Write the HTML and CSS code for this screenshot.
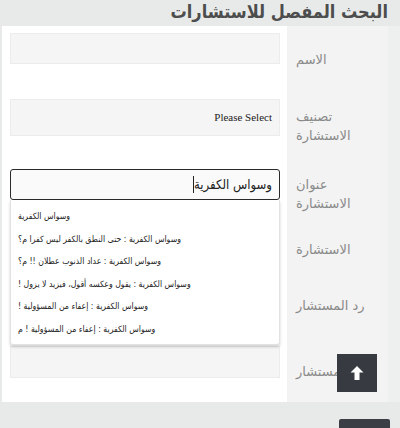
FILE: index.html
```html
<!DOCTYPE html>
<html lang="ar" dir="rtl">
<head>
<meta charset="utf-8">
<link rel="stylesheet" href="styles.css">
</head>
<body>
<h1 class="title">البحث المفصل للاستشارات</h1>
<div class="panel">
  <div class="form">
    <div class="row r1">
      <div class="label">الاسم</div>
      <div class="field"><div class="inp"></div></div>
    </div>
    <div class="row r2">
      <div class="label">تصنيف<br>الاستشارة</div>
      <div class="field"><div class="inp sel" dir="ltr">Please Select</div></div>
    </div>
    <div class="row r3">
      <div class="label">عنوان<br>الاستشارة</div>
      <div class="field">
        <div class="inp focus"><span class="typed">وسواس الكفرية</span><span class="caret"></span></div>
        <ul class="ac">
          <li>وسواس الكفرية</li>
          <li>وسواس الكفرية : حتى النطق بالكفر ليس كفرا م؟</li>
          <li>وسواس الكفرية : عداد الذنوب عطلان !! م؟</li>
          <li>وسواس الكفرية : يقول وعكسه أقول، فيزيد لا يزول !</li>
          <li>وسواس الكفرية : إعفاء من المسؤولية !</li>
          <li>وسواس الكفرية : إعفاء من المسؤولية ! م</li>
        </ul>
      </div>
    </div>
    <div class="row r4">
      <div class="label">الاستشارة</div>
      <div class="field"><div class="inp tall"></div></div>
    </div>
    <div class="row r5">
      <div class="label">رد المستشار</div>
      <div class="field"><div class="inp tall"></div></div>
    </div>
    <div class="row r6">
      <div class="label">المستشار</div>
      <div class="field"><div class="inp last"></div></div>
    </div>
  </div>
</div>
<div class="actions"><button class="submit" type="button"></button></div>
<button class="totop" type="button" aria-label="top">
  <svg width="14" height="16" viewBox="0 0 14 16"><path d="M7 1 L13.5 7.5 L9.5 7.5 L9.5 15 L4.5 15 L4.5 7.5 L0.5 7.5 Z" fill="#fff"/></svg>
</button>
</body>
</html>
```

FILE: styles.css
```css
html, body {
  margin: 0;
  padding: 0;
}
body {
  background: #e8eaea;
  font-family: "DejaVu Sans", sans-serif;
  width: 400px;
  height: 428px;
  overflow: hidden;
}
.title {
  margin: 0;
  padding: 0 12px 0 0;
  height: 26px;
  line-height: 24px;
  font-family: "DejaVu Sans Condensed", "DejaVu Sans", sans-serif;
  font-size: 18px;
  font-weight: bold;
  color: #4d4d4d;
  text-align: right;
}
.panel {
  margin-left: 2px;
  padding-right: 12px;
  background: #eef0f0;
}
.form {
  display: flex;
  flex-direction: column;
}
.row {
  display: flex;
}
.label {
  width: 101px;
  box-sizing: border-box;
  background: #f3f3f3;
  padding-left: 9px;
  text-align: left;
  font-size: 13px;
  line-height: 19px;
  color: #8a8a8a;
}
.field {
  flex: 1;
  background: #fff;
  padding: 7px 7px 0 8px;
  position: relative;
}
.inp {
  height: 31px;
  box-sizing: border-box;
  background: #f5f5f5;
  border: 1px solid #ececec;
}
.sel {
  height: 37px;
  text-align: right;
  padding-right: 7px;
  font-family: "Liberation Serif", serif;
  font-size: 11px;
  line-height: 34px;
  color: #222;
}
.focus {
  background: #fafafa;
  border: 1px solid #2a2a2a;
  border-radius: 3px;
  display: flex;
  align-items: center;
  padding-right: 7px;
  font-family: "DejaVu Sans Condensed", "DejaVu Sans", sans-serif;
  font-size: 13px;
  color: #222;
}
.caret {
  width: 1px;
  height: 17px;
  background: #222;
}
.tall {
  height: 44px;
}
.last {
  height: 32px;
}
.r1 { height: 66px; }
.r1 .label { padding-top: 24px; }
.r2 { height: 70px; }
.r2 .label { padding-top: 15px; }
.r3 { height: 60px; }
.r3 .label { padding-top: 13px; }
.r4 { height: 56px; }
.r4 .label { padding-top: 18px; }
.r5 { height: 61px; }
.r5 .label { padding-top: 18px; }
.r6 { height: 63px; }
.r6 .label { padding-top: 23px; }
.ac {
  position: absolute;
  top: 38px;
  left: 8px;
  right: 7px;
  height: 145px;
  box-sizing: border-box;
  margin: 0;
  padding: 5px 0 0 0;
  list-style: none;
  background: #fff;
  border: 1px solid #e2e2e2;
  border-top: none;
  border-radius: 0 0 3px 3px;
  box-shadow: 0 2px 3px rgba(0, 0, 0, 0.18);
  z-index: 2;
}
.ac li {
  height: 22.6px;
  line-height: 22.6px;
  padding-left: 7px;
  text-align: left;
  font-family: "DejaVu Sans Condensed", "DejaVu Sans", sans-serif;
  font-size: 8.7px;
  color: #222;
  white-space: nowrap;
}
.actions {
  display: flex;
  padding: 17px 10px 0 0;
}
.submit {
  width: 51px;
  height: 30px;
  border: none;
  background: #3b3e45;
  border-radius: 2px;
}
.totop {
  position: fixed;
  left: 337px;
  top: 354px;
  width: 40px;
  height: 38px;
  border: none;
  padding: 0;
  background: #383a41;
  display: flex;
  align-items: center;
  justify-content: center;
  z-index: 5;
}
.totop svg {
  display: block;
}
```
